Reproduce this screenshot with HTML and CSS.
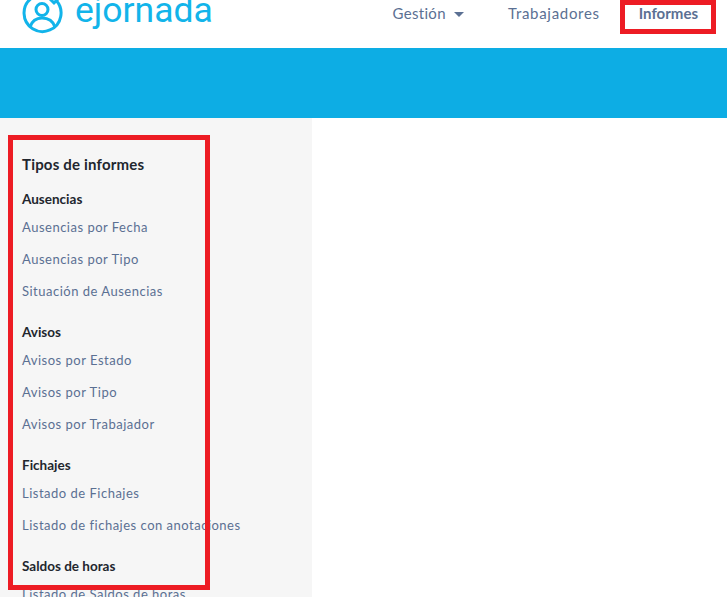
FILE: index.html
```html
<!DOCTYPE html>
<html lang="es">
<head>
  <meta charset="UTF-8" />
  <meta name="viewport" content="width=device-width, initial-scale=1.0"/>
  <title>ejornada - Informes</title>
  <link rel="stylesheet" href="styles.css">
</head>
<body>
  <header class="cabecera">
    <a class="logo" href="#">
      <svg class="logoIcono" width="44" height="36" viewBox="0 0 44 36" fill="none" stroke="currentColor" stroke-width="3">
        <path d="M34.6 -0.1 A18.5 18.5 0 1 1 27.8 -4.4"/>
        <circle cx="21" cy="9.5" r="6"/>
        <path d="M9 27 C11 21 15 18 21 18 C27 18 32 21 34 27"/>
        <path d="M29 -1 L33 3 L40 -4"/>
      </svg>
      <span class="logoTexto">ejornada</span>
    </a>
    <nav class="menu">
      <a class="gestion" href="#">Gestión <span class="flecha"></span></a>
      <a class="trabajadores" href="#">Trabajadores</a>
      <a class="activo" href="#">Informes</a>
    </nav>
  </header>

  <div class="banda"></div>

  <main class="contenido">
    <aside class="lateral">
      <h2>Tipos de informes</h2>

      <section class="grupo">
        <h3>Ausencias</h3>
        <a href="#">Ausencias por Fecha</a>
        <a href="#">Ausencias por Tipo</a>
        <a href="#">Situación de Ausencias</a>
      </section>

      <section class="grupo">
        <h3>Avisos</h3>
        <a href="#">Avisos por Estado</a>
        <a href="#">Avisos por Tipo</a>
        <a href="#">Avisos por Trabajador</a>
      </section>

      <section class="grupo">
        <h3>Fichajes</h3>
        <a href="#">Listado de Fichajes</a>
        <a href="#">Listado de fichajes con anotaciones</a>
      </section>

      <section class="grupo">
        <h3>Saldos de horas</h3>
        <a href="#">Listado de Saldos de horas</a>
      </section>
    </aside>
  </main>

  <!-- Marcas rojas sobre la captura -->
  <div class="marca marcaMenu"></div>
  <div class="marca marcaLateral"></div>
</body>
</html>
```

FILE: styles.css
```css
:root {
  --azul: #0dade4;
  --logo: #12b4ea;
  --enlace: #5b7093;
  --oscuro: #22262e;
  --gris: #f6f6f6;
  --rojo: #ed1c24;
}

html, body {
  height: 597px;
  overflow: hidden;
}

body {
  margin: 0;
  font-family: 'Lato', sans-serif;
  background-color: #fff;
  color: var(--oscuro);
}

a {
  text-decoration: none;
  color: var(--enlace);
}

.cabecera {
  height: 48px;
  display: flex;
  justify-content: space-between;
  overflow: hidden;
}

.logo {
  display: flex;
  gap: 10px;
  height: 34px;
  padding-left: 21px;
  color: var(--logo);
}

.logoIcono {
  flex: none;
  overflow: visible;
}

.logoTexto {
  font-family: 'Roboto', sans-serif;
  font-weight: 400;
  font-size: 35.5px;
  line-height: 24px;
  margin-top: -2px;
}

.menu {
  display: flex;
  height: 26px;
  align-items: center;
  font-size: 15px;
  letter-spacing: 0.3px;
}

.gestion {
  margin-right: 44px;
}

.flecha {
  display: inline-block;
  margin-left: 4px;
  vertical-align: 2px;
  border-left: 5px solid transparent;
  border-right: 5px solid transparent;
  border-top: 5px solid var(--enlace);
}

.trabajadores {
  margin-right: 39px;
  letter-spacing: 0.7px;
}

.activo {
  margin-right: 29px;
  font-weight: 700;
  letter-spacing: 0;
}

.banda {
  height: 70px;
  background-color: var(--azul);
}

.contenido {
  display: flex;
}

.lateral {
  width: 290px;
  height: 479px;
  padding: 37px 0 0 22px;
  background-color: var(--gris);
}

h2 {
  margin: 0 0 17px;
  font-size: 15px;
  font-weight: 700;
  line-height: 18px;
  letter-spacing: 0.2px;
}

.grupo {
  margin-bottom: 16px;
}

h3 {
  margin: 0;
  font-size: 13.5px;
  font-weight: 700;
  line-height: 18px;
  padding-bottom: 3px;
}

.grupo a {
  display: block;
  font-size: 13px;
  line-height: 32px;
  letter-spacing: 0.5px;
}

.marca {
  position: absolute;
  box-sizing: border-box;
  border: 5px solid var(--rojo);
}

.marcaMenu {
  left: 620px;
  top: 0;
  width: 96px;
  height: 34px;
}

.marcaLateral {
  left: 8px;
  top: 135px;
  width: 202px;
  height: 455px;
}
```
